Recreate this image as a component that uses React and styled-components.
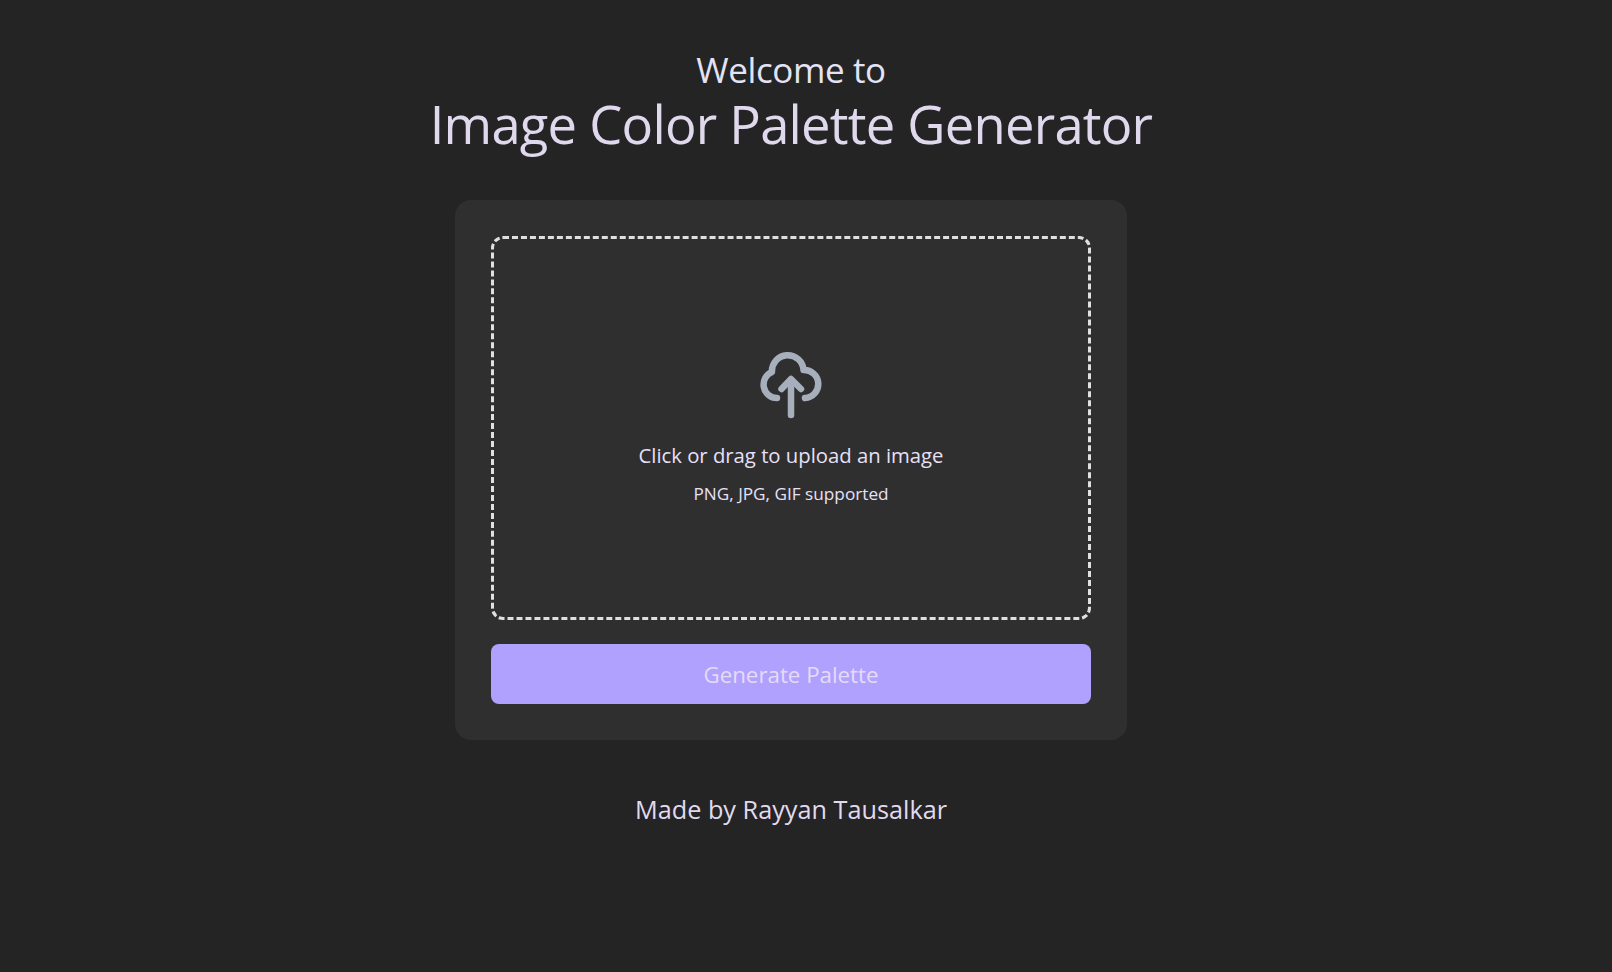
import React from "react";
import styled, { createGlobalStyle } from "styled-components";

const Global = createGlobalStyle`
  html, body { margin: 0; padding: 0; background: #242424; }
  body { font-family: "Open Sans", "Noto Sans", sans-serif; }
`;

const Page = styled.main`
  min-height: 972px;
  box-sizing: border-box;
  padding: 48px 30px 0 0;
  display: flex;
  flex-direction: column;
  align-items: center;
  background: #242424;
`;

const Header = styled.header`
  display: flex;
  flex-direction: column;
  align-items: center;
  margin-bottom: 44px;
`;

const Welcome = styled.h2`
  margin: 0;
  font-size: 35px;
  line-height: 44px;
  font-weight: 400;
  letter-spacing: -0.4px;
  color: #e3e3f5;
`;

const Title = styled.h1`
  margin: 0;
  font-size: 52.500px;
  line-height: 64px;
  font-weight: 400;
  letter-spacing: -0.75px;
  color: #e0d9ee;
`;

const Card = styled.section`
  width: 672px;
  box-sizing: border-box;
  padding: 36px;
  background: #2f2f2f;
  border-radius: 16px;
  display: flex;
  flex-direction: column;
  gap: 24px;
`;

const DropZone = styled.div`
  height: 384px;
  box-sizing: border-box;
  padding-bottom: 2px;
  border: 3px dashed #e0e0e0;
  border-radius: 12px;
  display: flex;
  flex-direction: column;
  align-items: center;
  justify-content: center;
`;

const UploadIcon = styled.svg`
  width: 65px;
  height: 75px;
  color: #a7afbd;
  margin-bottom: 17px;
`;

const DropLabel = styled.p`
  margin: 0;
  font-size: 20.300px;
  line-height: 28px;
  color: #e8e0f8;
`;

const DropHint = styled.p`
  margin: 13px 0 0;
  font-size: 17.200px;
  line-height: 24px;
  color: #e8e0f8;
`;

const GenerateButton = styled.button`
  height: 60px;
  border: 0;
  border-radius: 8px;
  background: #b1a1ff;
  color: #e4dcf6;
  font-family: inherit;
  font-size: 22.300px;
`;

const Footer = styled.footer`
  margin-top: 52px;
  font-size: 25.250px;
  line-height: 34px;
  color: #e1daee;
`;

export default function App() {
  return (
    <Page>
      <Global />
      <Header>
        <Welcome>Welcome to</Welcome>
        <Title>Image Color Palette Generator</Title>
      </Header>
      <Card>
        <DropZone>
          <UploadIcon viewBox="139 10 65 75" fill="none" stroke="currentColor" strokeWidth="6.5" strokeLinecap="round" strokeLinejoin="round">
            <path d="M157 59A13.5 13.5 0 0 1 152 33A15.5 15.5 0 0 1 183.5 31A14 14 0 0 1 185 59" />
            <path d="M171 76V41" />
            <path d="M161.500 50L171 40L181 50" />
          </UploadIcon>
          <DropLabel>Click or drag to upload an image</DropLabel>
          <DropHint>PNG, JPG, GIF supported</DropHint>
        </DropZone>
        <GenerateButton>Generate Palette</GenerateButton>
      </Card>
      <Footer>Made by Rayyan Tausalkar</Footer>
    </Page>
  );
}
